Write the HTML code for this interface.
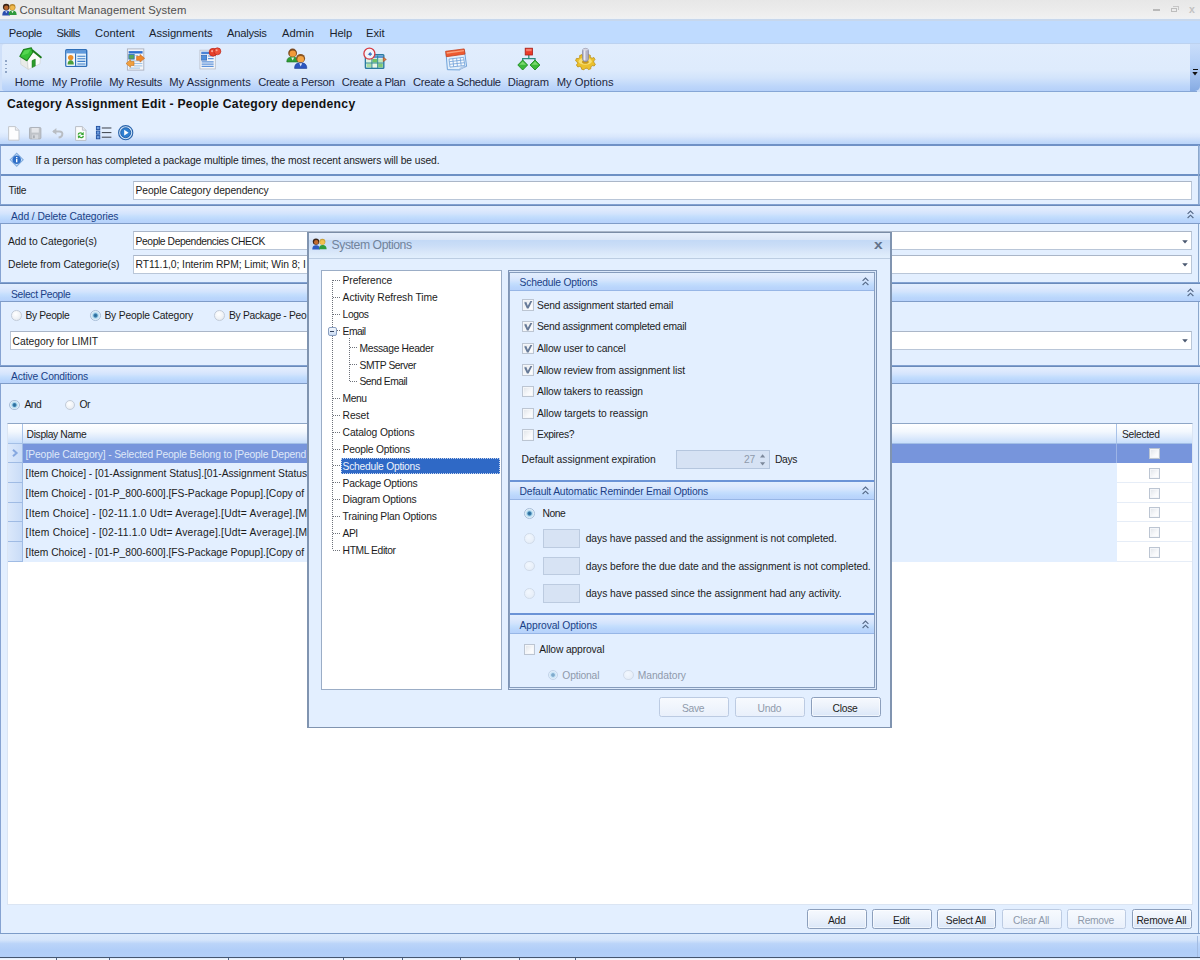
<!DOCTYPE html>
<html lang="en"><head><meta charset="utf-8"><title>Consultant Management System</title>
<style>
html,body{margin:0;padding:0}
body{width:1200px;height:960px;overflow:hidden;position:relative;background:#e3efff;font-family:"Liberation Sans", sans-serif}
div{position:absolute;box-sizing:border-box}
span{position:absolute;white-space:pre;line-height:14px;font-family:"Liberation Sans", sans-serif}
svg{position:absolute;overflow:visible}
.t{font-size:10.3px;font-weight:400;color:#1c1c1c}
.tw{font-size:10.3px;font-weight:400;color:#eef3fc}
.tg{font-size:10.3px;font-weight:400;color:#8f9aab}
.th{font-size:10.3px;font-weight:400;color:#1b3f86}
.tsel{font-size:10.3px;font-weight:400;color:#dfe8f9}
.m{font-size:11.2px;font-weight:400;color:#1a1f2e}
.tb{font-size:11.2px;font-weight:400;color:#1d2740}
.ttl{font-size:11.3px;font-weight:400;color:#505050}
.dt{font-size:12.2px;font-weight:400;color:#71839b}
.h{font-size:12.2px;font-weight:700;color:#121212}

.hd{background:linear-gradient(#e2eefe 0%,#dde9fd 25%,#d3e4fd 45%,#c4defd 62%,#bad6fc 82%,#b7d2fb 100%)}
.inp{background:#fff;border:1px solid #b9c6d8;border-top-color:#aab6c8}
.btn{border:1px solid #8c9fbc;border-radius:2.5px;background:linear-gradient(#f6f9fe 0%,#ecf2fb 45%,#dbe7f8 100%);box-shadow:inset 0 0 0 1px rgba(255,255,255,.55)}
.btnd{border:1px solid #bccbe2;border-radius:2.5px;background:linear-gradient(#f7fafe 0%,#e9f0fb 100%)}
.cb{border:1px solid #bcc5d2;background:linear-gradient(135deg,#dfe3e8 0%,#f8f9fb 60%,#ffffff 100%);box-shadow:inset 0 0 0 1px #f4f6f9}
.rb{border:1px solid #c3ccd9;border-radius:50%;background:radial-gradient(circle at 40% 35%,#ffffff 0%,#eef1f5 60%,#d8dde5 100%)}
.rbs{border:1px solid #a9bed8;border-radius:50%;background:radial-gradient(circle at 50% 50%,#2a6690 0%,#3a80b0 26%,#a9d4ec 40%,#e3f1fa 66%,#d3dfec 100%)}

</style></head><body>
<div style="left:0px;top:0px;width:1200px;height:19.4px;background:linear-gradient(#e7e7e7 0%,#ececec 55%,#f0f0f0 88%,#edf1f5 100%)"></div>
<svg style="left:2px;top:3px" width="15" height="13" viewBox="0 0 15 13">
<circle cx="4.2" cy="4" r="3.3" fill="#3a2418"/><circle cx="4.3" cy="4.7" r="2.2" fill="#b8662e"/>
<path d="M0.3 12.6 C0.3 8.6 2 7.6 4.3 7.6 C6.6 7.6 8 8.8 8 12.6Z" fill="#2b4fb0"/>
<circle cx="10.4" cy="4.2" r="3.1" fill="#b8862a"/><circle cx="10.4" cy="4.8" r="2.4" fill="#f0b84a"/>
<path d="M6.6 12 C6.6 8.4 8.2 7.4 10.5 7.4 C12.8 7.4 14.6 8.4 14.6 12Z" fill="#2f9a3c"/>
<path d="M9.4 8 L10.5 10.2 L11.6 8Z" fill="#e8f4e8"/><path d="M3.2 8.2 L4.3 10.2 L5.4 8.2Z" fill="#dfe6fb"/>
</svg>
<span class="ttl" style="left:19.50px;top:3.18px;letter-spacing:0.111px;">Consultant Management System</span>
<div style="left:1153px;top:9px;width:7px;height:1.6px;background:#b9b9b9"></div>
<div style="left:1170.5px;top:7.5px;width:6px;height:4.5px;border:1px solid #bdbdbd;border-top-width:1.6px"></div>
<div style="left:1172.5px;top:5.8px;width:6px;height:4.5px;border:1px solid #c6c6c6;border-top-width:1.4px;border-left:none;border-bottom:none"></div>
<span class="ttl" style="left:1189.00px;top:2.48px;letter-spacing:-0.100px;color:#c2c2c2;font-weight:700;font-size:10.5px">x</span>
<div style="left:0px;top:19.4px;width:1200px;height:24.6px;background:#bfdbff;border-top:2px solid #c7d7ec;border-bottom:1px solid #bcd2f0"></div>
<span class="m" style="left:8.80px;top:25.52px;letter-spacing:-0.274px;">People</span>
<span class="m" style="left:56.50px;top:25.52px;letter-spacing:-0.435px;">Skills</span>
<span class="m" style="left:95.00px;top:25.52px;letter-spacing:0.073px;">Content</span>
<span class="m" style="left:149.00px;top:25.52px;letter-spacing:-0.050px;">Assignments</span>
<span class="m" style="left:227.00px;top:25.52px;letter-spacing:-0.246px;">Analysis</span>
<span class="m" style="left:282.00px;top:25.52px;letter-spacing:0.056px;">Admin</span>
<span class="m" style="left:329.50px;top:25.52px;letter-spacing:-0.129px;">Help</span>
<span class="m" style="left:366.00px;top:25.52px;letter-spacing:-0.039px;">Exit</span>
<div style="left:0px;top:44px;width:1200px;height:48px;background:#cfe0f9"></div>
<div style="left:1.6px;top:44px;width:1189.4px;height:47.3px;background:linear-gradient(#e1edfd 0%,#deebfc 55%,#d3e4fb 72%,#bdd6fa 90%,#b5d0f9 100%);border-radius:3px 0 0 3px"></div>
<div style="left:1190px;top:44px;width:10px;height:47.3px;background:linear-gradient(#c9ddfa 0%,#b4cff6 45%,#86abe3 100%);border-radius:0 0 5px 0"></div>
<div style="left:0px;top:91px;width:1197px;height:1.2px;background:#86a6d6"></div>
<div style="left:0px;top:92.2px;width:1200px;height:1.6px;background:#e3f0fd"></div>
<div style="left:5px;top:60.0px;width:1.7px;height:1.7px;background:#8fa5c6"></div>
<div style="left:5px;top:63.8px;width:1.7px;height:1.7px;background:#8fa5c6"></div>
<div style="left:5px;top:67.6px;width:1.7px;height:1.7px;background:#8fa5c6"></div>
<div style="left:5px;top:71.4px;width:1.7px;height:1.7px;background:#8fa5c6"></div>
<div style="left:1192.5px;top:69px;width:5px;height:1.1px;background:#111"></div>
<svg style="left:1192px;top:71.5px" width="6" height="4" viewBox="0 0 6 4"><path d="M0.3 0 L5.7 0 L3 3.6Z" fill="#111"/></svg>
<span class="tb" style="left:14.70px;top:74.52px;letter-spacing:-0.011px;">Home</span>
<span class="tb" style="left:52.00px;top:74.52px;letter-spacing:0.057px;">My Profile</span>
<span class="tb" style="left:109.30px;top:74.52px;letter-spacing:-0.263px;">My Results</span>
<span class="tb" style="left:169.30px;top:74.52px;letter-spacing:0.003px;">My Assignments</span>
<span class="tb" style="left:258.20px;top:74.52px;letter-spacing:-0.358px;">Create a Person</span>
<span class="tb" style="left:341.80px;top:74.52px;letter-spacing:-0.379px;">Create a Plan</span>
<span class="tb" style="left:413.00px;top:74.52px;letter-spacing:-0.287px;">Create a Schedule</span>
<span class="tb" style="left:507.80px;top:74.52px;letter-spacing:-0.183px;">Diagram</span>
<span class="tb" style="left:556.70px;top:74.52px;letter-spacing:0.042px;">My Options</span>
<svg style="left:18px;top:46px" width="25" height="26" viewBox="18 46 25 26">
<path d="M20.6 57.6 L27.4 60.6 L28.3 69.4 L20.8 64.4Z" fill="#e9ebe7" stroke="#c4c7c2" stroke-width=".5"/>
<path d="M27.4 60.6 L32.8 51.4 L40.4 57.8 L40 63.8 L28.3 69.4Z" fill="#fbfbfa" stroke="#c4c7c2" stroke-width=".5"/>
<path d="M32 60.6 L35.3 59.1 L35.3 66 L32 67.6Z" fill="#2c9c2c" stroke="#1d7a1d" stroke-width=".5"/>
<path d="M19.8 56.4 L23.6 49.6 L31.4 47.9 L33 52 L26.9 60.7Z" fill="#36c036" stroke="#1f821f" stroke-width="1.1" stroke-linejoin="round"/>
<path d="M21.4 55.8 L24.4 50.6 L30.4 49.3 L28.2 53.4Z" fill="#55d650"/>
<path d="M32.6 50.6 L40.8 57.3" stroke="#1c7a1c" stroke-width="2" stroke-linecap="round"/>
</svg>
<svg style="left:65px;top:49px" width="23" height="18.5" viewBox="65 49 23 18.5">
<rect x="65.8" y="49.8" width="20.9" height="16.6" rx="1" fill="#e2f1fb" stroke="#2f6fb8" stroke-width="1.4"/>
<rect x="66.5" y="50.5" width="19.5" height="3" fill="#3d7fd0"/>
<rect x="66.5" y="51.6" width="19.5" height=".8" fill="#8fc0ee"/>
<rect x="66.6" y="53.5" width="8.2" height="12.2" fill="#f4f8fc"/>
<rect x="75" y="53.5" width="1.1" height="12.4" fill="#2f6fb8"/>
<circle cx="70.7" cy="57.6" r="2.7" fill="#ea8f2a"/><path d="M67.6 64.6 C67.6 61.2 69 60.2 70.7 60.2 C72.4 60.2 73.8 61.2 73.8 64.6Z" fill="#4c9e3a"/>
<path d="M77.4 56.2H85.4M77.4 58.8H85.4M77.4 61.4H85.4M77.4 64H85.4" stroke="#3c7cc8" stroke-width="1.1"/>
</svg>
<svg style="left:125px;top:47.5px" width="21" height="23.0" viewBox="125 47.5 21 23.0">
<rect x="127.4" y="48.4" width="16.4" height="21.2" fill="#f3f5f9" stroke="#aab0bd" stroke-width=".9"/>
<rect x="128.6" y="50.6" width="14" height="2.4" fill="#2f6fd0"/>
<rect x="128.8" y="54" width="5.4" height="4.6" fill="#58a858" stroke="#2f6fbf" stroke-width=".8"/>
<path d="M135.4 55H138M129 60.4H142.4M133 63H142.4M134 65.4H142.4M129 67.6H140" stroke="#9fc4e6" stroke-width="1"/>
<path d="M136.6 55.8 L140 55.8 L140 54 L144.6 57.8 L140 61.6 L140 59.8 L136.6 59.8Z" fill="#f0882a" stroke="#c8641c" stroke-width=".6"/>
<path d="M134 61 L130.6 61 L130.6 59.2 L126 63 L130.6 66.8 L130.6 65 L134 65Z" fill="#efa040" stroke="#c8741c" stroke-width=".6"/>
</svg>
<svg style="left:199.4px;top:47.4px" width="22.5" height="22.5" viewBox="0 0 24 24">
<rect x="1" y="3.4" width="16.4" height="20" fill="#f4f6fa" stroke="#b9bfcb" stroke-width=".9"/>
<rect x="2.4" y="5" width="13.4" height="2.6" fill="#4b83d6"/>
<rect x="2.8" y="8.8" width="5.4" height="5.2" fill="#4f8fdc" stroke="#2d62b0" stroke-width=".7"/>
<path d="M9.6 9.6H15.6M9.6 12.4H15.6M2.8 15.8H15.6M2.8 18.2H15.6M2.8 20.6H15.6" stroke="#5d92da" stroke-width="1.2"/>
<circle cx="15" cy="5.6" r="4.2" fill="#e8402a" stroke="#b4241a" stroke-width=".7"/>
<circle cx="19.6" cy="4.6" r="3.7" fill="#ee5038" stroke="#b4241a" stroke-width=".7"/>
<circle cx="14" cy="4.4" r="1.2" fill="#f9a090"/><circle cx="18.8" cy="3.4" r="1.1" fill="#f9a898"/>
</svg>
<svg style="left:285.6px;top:48px" width="22" height="21" viewBox="0 0 22 21">
<circle cx="6.6" cy="5" r="4.4" fill="#7c4a1f"/><circle cx="6.8" cy="5.8" r="3.2" fill="#f29a3a"/>
<path d="M.8 14 C.8 9.8 3.4 9 6.6 9 C9.8 9 12.2 9.8 12.2 14Z" fill="#2f9e37" stroke="#1c6e22" stroke-width=".6"/>
<path d="M5.2 9.4 L6.7 12.4 L8.2 9.4Z" fill="#eaf5ea"/>
<circle cx="14.6" cy="10.4" r="4.5" fill="#8a5522"/><circle cx="14.7" cy="11.3" r="3.3" fill="#f4a444"/>
<path d="M8.6 20.4 C8.6 15.8 11.2 14.8 14.6 14.8 C18 14.8 20.8 15.8 20.8 20.4Z" fill="#2c56c0" stroke="#1b3a90" stroke-width=".6"/>
<path d="M13.2 15.2 L14.7 18.4 L16.2 15.2Z" fill="#e6ebfa"/>
</svg>
<svg style="left:361px;top:46.5px" width="27" height="23.5" viewBox="361 46.5 27 23.5">
<rect x="365.4" y="54.2" width="18.4" height="13.6" rx=".8" fill="#f1f8f4" stroke="#2a7aa0" stroke-width="1.4"/>
<rect x="366.2" y="55" width="16.8" height="2.6" fill="#5a98d8"/>
<rect x="366.6" y="58.4" width="4.8" height="3.6" fill="#dff1dc"/><rect x="372.4" y="58.4" width="4.8" height="3.6" fill="#6fc266"/><rect x="378.2" y="58.4" width="4.6" height="3.6" fill="#c4e8bd"/>
<rect x="366.6" y="63" width="4.8" height="3.8" fill="#a8dca0"/><rect x="372.4" y="63" width="4.8" height="3.8" fill="#e8f5e6"/><rect x="378.2" y="63" width="4.6" height="3.8" fill="#7fca76"/>
<path d="M371.9 57.6V67.4M377.7 55V67.4M366 62.5H383.4" stroke="#2f8a8c" stroke-width="1"/>
<path d="M383.2 56.6 L386.4 59 L383.2 61.2Z" fill="#e8763a" stroke="#8a4a2a" stroke-width=".5"/>
<circle cx="369.4" cy="53.2" r="5.5" fill="#f0f5fc" stroke="#d63a42" stroke-width="1.3"/>
<path d="M372 53.6 H369 L370.6 52 M369 53.6 L370.6 55.2" fill="none" stroke="#3c6cc0" stroke-width="1.1"/>
</svg>
<svg style="left:444px;top:47.5px" width="25" height="23.0" viewBox="444 47.5 25 23.0">
<path d="M446 52 L464.4 49.6 L466.6 65.8 C463.6 66.6 461 68 459.4 69.4 L447.4 69.2Z" fill="#e2effb" stroke="#6ea2da" stroke-width="1"/>
<path d="M445.6 50.8 L464.2 48.4 L465 53.6 L446.4 56.2Z" fill="#ee5a30" stroke="#c8401c" stroke-width=".8"/>
<path d="M446.6 51.8 L463.8 49.6 L464 50.8 L446.8 53.2Z" fill="#f9a27c"/>
<path d="M449 58.6 L463.6 56.8 L464.8 65 L450 66.6Z" fill="#f6fafe"/>
<path d="M449 58.6 L463.6 56.8 M449.4 61.2 L464 59.4 M449.8 63.8 L464.4 62.2 M450 66.6 L464.8 65 M449 58.6 L450 66.6 M452.8 58.2 L453.6 66.2 M456.6 57.7 L457.4 65.8 M460.2 57.2 L461.2 65.4 M463.6 56.8 L464.8 65" stroke="#6f9fd8" stroke-width=".8"/>
<path d="M459.4 69.4 C459.8 67.4 460.6 66.4 466.6 65.8Z" fill="#c8d9ee" stroke="#8fb0dc" stroke-width=".6"/>
</svg>
<svg style="left:516px;top:47px" width="26" height="24" viewBox="516 47 26 24">
<path d="M528.8 55V58.6M522.7 60.4V58.6H535V60.4" fill="none" stroke="#2a8c7c" stroke-width="1.3"/>
<rect x="525.2" y="48.2" width="7.3" height="6.8" fill="#ec3a2a" stroke="#a82018" stroke-width=".8"/>
<rect x="526.1" y="49" width="5.5" height="2.2" fill="#f77c6c"/>
<path d="M522.7 60 L527.6 65 L522.7 70 L517.8 65Z" fill="#3cb83a" stroke="#1f8a22" stroke-width=".9"/>
<path d="M535 60 L539.9 65 L535 70 L530.1 65Z" fill="#3cb83a" stroke="#1f8a22" stroke-width=".9"/>
<path d="M522.7 61.4 L526 64.8 L519.4 64.8Z" fill="#7cd870"/><path d="M535 61.4 L538.3 64.8 L531.7 64.8Z" fill="#7cd870"/>
</svg>
<svg style="left:573px;top:47px" width="25" height="24" viewBox="573 47 25 24">
<path d="M585 55.6 L587.6 55.8 L588.8 54.4 L591 55.4 L590.8 57.4 L592.8 58.2 L594.4 57.4 L595.6 59.6 L594.2 61 L594.6 62.8 L596 64 L594.8 66 L592.8 65.6 L591.4 67 L591.4 68.8 L589 69.6 L587.8 68.2 L585.8 68.4 L584.6 69.8 L582.2 69.2 L582 67.4 L580.2 66.4 L578.4 67 L577 65 L578.2 63.6 L577.8 61.8 L576.2 60.8 L577 58.4 L578.8 58.6 L580.4 57.4 L580.2 55.6 L582.6 54.6 L583.8 56Z" fill="#ebc02c" stroke="#bd9016" stroke-width=".8" stroke-linejoin="round" transform="translate(-0.6 0)"/>
<ellipse cx="585.2" cy="61.2" rx="6.6" ry="3.6" fill="#f7df72"/>
<ellipse cx="585.4" cy="62" rx="3.4" ry="1.8" fill="#c8991c"/>
<rect x="582.6" y="48.4" width="5.8" height="13" rx="2.4" fill="#b4b2c8" stroke="#84849c" stroke-width=".8"/>
<rect x="583.7" y="49.2" width="1.7" height="11.4" rx=".8" fill="#e8e8f0"/>
<ellipse cx="585.5" cy="49.6" rx="2.6" ry="1.1" fill="#d6d6e2"/>
</svg>
<span class="h" style="left:7.00px;top:97.07px;letter-spacing:0.284px;">Category Assignment Edit - People Category dependency</span>
<div style="left:0px;top:132px;width:1200px;height:12.5px;background:linear-gradient(#e3efff 0%,#d9e7fc 35%,#c2d9fa 75%,#b7d3fa 100%)"></div>
<div style="left:0px;top:144.2px;width:1200px;height:1.6px;background:#6f91c6"></div>
<div style="left:0px;top:145.8px;width:1200px;height:29px;background:#e3efff;border-left:1px solid #86a3d2;border-right:1.2px solid #a3bde3"></div>
<span class="t" style="left:35.50px;top:153.93px;letter-spacing:-0.091px;">If a person has completed a package multiple times, the most recent answers will be used.</span>
<div style="left:0px;top:174.4px;width:1200px;height:1.5px;background:#6d90c4"></div>
<div style="left:0px;top:175.9px;width:1200px;height:30px;background:#e3efff;border-left:1px solid #86a3d2;border-right:1.2px solid #a3bde3"></div>
<svg style="left:7.5px;top:125.8px" width="11.6" height="14.8" viewBox="0 0 11.6 14.8"><path d="M.6 .6 H7.4 L11 4.2 V14.2 H.6Z" fill="#fdfdfe" stroke="#c3c7cd" stroke-width="1"/><path d="M7.4 .6 V4.2 H11" fill="#eceef2" stroke="#c3c7cd" stroke-width=".9"/></svg>
<svg style="left:29px;top:127px" width="12.4" height="12.4" viewBox="0 0 12.4 12.4"><rect x=".5" y=".5" width="11.4" height="11.4" rx="1" fill="#bfc3c8" stroke="#a9aeb5" stroke-width=".9"/><rect x="2.6" y="1" width="7.2" height="4.6" fill="#e4e6ea"/><rect x="3.2" y="7.6" width="6" height="4.2" fill="#d5d8dd"/><rect x="4" y="8.4" width="1.8" height="2.8" fill="#a9aeb5"/></svg>
<svg style="left:52px;top:128px" width="12" height="10.4" viewBox="0 0 12 10.4"><path d="M1 3.4 H7.2 C9.8 3.4 10.8 5 10.2 7 C9.8 8.6 8.6 9.4 6.6 9.6" fill="none" stroke="#b9bdc3" stroke-width="2"/><path d="M4.4 0 L.2 3.4 L4.4 6.8Z" fill="#b9bdc3"/></svg>
<svg style="left:75px;top:125.6px" width="11.6" height="15" viewBox="0 0 11.6 15"><path d="M.6 .6 H7.4 L11 4.2 V14.4 H.6Z" fill="#fbfcfd" stroke="#b9bec6" stroke-width="1"/><path d="M7.4 .6 V4.2 H11" fill="#e6e9ee" stroke="#b9bec6" stroke-width=".9"/>
<path d="M2.6 8.4 C3 6.2 6 5.6 7.6 7 L8.6 5.8 L8.8 9.2 L5.6 8.8 L6.6 7.9 C5.6 7.2 4.2 7.6 3.9 8.8Z" fill="#38a632"/>
<path d="M9 10.2 C8.6 12.4 5.6 13 4 11.6 L3 12.8 L2.8 9.4 L6 9.8 L5 10.7 C6 11.4 7.4 11 7.7 9.8Z" fill="#38a632"/></svg>
<svg style="left:95.5px;top:126.4px" width="15.6" height="13.4" viewBox="0 0 15.6 13.4"><rect x=".4" y=".4" width="3.4" height="3.2" fill="#6f9fe0" stroke="#1f4fa0" stroke-width=".9"/><rect x=".4" y="5" width="3.4" height="3.2" fill="#6f9fe0" stroke="#1f4fa0" stroke-width=".9"/><rect x=".4" y="9.6" width="3.4" height="3.2" fill="#6f9fe0" stroke="#1f4fa0" stroke-width=".9"/>
<path d="M5.8 2H15.4M5.8 6.6H15.4M5.8 11.2H15.4" stroke="#3a3f49" stroke-width="1"/></svg>
<svg style="left:117.8px;top:125.4px" width="15.4" height="15.4" viewBox="0 0 15.4 15.4"><circle cx="7.7" cy="7.7" r="7.1" fill="#cfe4f8" stroke="#2a64ac" stroke-width="1.1"/><circle cx="7.7" cy="7.7" r="5" fill="#2f7fd0" stroke="#1d5aa6" stroke-width=".9"/><path d="M6.2 4.8 L10.6 7.7 L6.2 10.6Z" fill="#fff"/></svg>
<svg style="left:9.2px;top:151.6px" width="15.4" height="15.6" viewBox="0 0 15.4 15.6"><path d="M7.7 .5 L14.9 7.8 L7.7 15.1 L.5 7.8Z" fill="#7fa9dc"/><path d="M7.7 2 L13.5 7.8 L7.7 13.6 L1.9 7.8Z" fill="#cde2f8"/><circle cx="7.7" cy="7.8" r="4.3" fill="#2f6fc8"/><rect x="7" y="6.9" width="1.4" height="3.4" fill="#fff"/><rect x="7" y="5" width="1.4" height="1.2" fill="#fff"/></svg>
<span class="t" style="left:8.40px;top:183.53px;letter-spacing:-0.216px;">Title</span>
<div class="inp" style="left:133px;top:181.2px;width:1059.4px;height:18.6px;"></div>
<span class="t" style="left:135.60px;top:183.53px;letter-spacing:-0.103px;">People Category dependency</span>
<div style="left:0px;top:145.8px;width:1px;height:788px;background:#86a3d2"></div>
<div style="left:1198.3px;top:145px;width:1.2px;height:789px;background:#8ca8cc"></div>
<div style="left:0px;top:204.1px;width:1200px;height:2px;background:linear-gradient(#94b3e2,#6a8aba 60%,#6a8aba)"></div>
<div class="hd" style="left:0px;top:206.1px;width:1200px;height:16.900000000000006px;"></div>
<div style="left:0px;top:223px;width:1200px;height:1.1px;background:#7f9cc8"></div>
<span class="th" style="left:11.00px;top:209.83px;letter-spacing:-0.084px;">Add / Delete Categories</span>
<svg style="left:1186.5px;top:210.1px" width="7" height="9" viewBox="0 0 7 9"><path d="M0.6 3.8 L3.5 1 L6.4 3.8 M0.6 8 L3.5 5.2 L6.4 8" fill="none" stroke="#566a88" stroke-width="1.15"/></svg>
<span class="t" style="left:8.00px;top:234.93px;letter-spacing:-0.016px;">Add to Categorie(s)</span>
<div class="inp" style="left:133px;top:231.2px;width:1059.4px;height:18.8px;"></div>
<span class="t" style="left:135.60px;top:234.93px;letter-spacing:-0.415px;">People Dependencies CHECK</span>
<span class="t" style="left:8.00px;top:257.93px;letter-spacing:-0.056px;">Delete from Categorie(s)</span>
<div class="inp" style="left:133px;top:254.8px;width:1059.4px;height:18.8px;"></div>
<span class="t" style="left:135.60px;top:257.93px;letter-spacing:-0.061px;">RT11.1,0; Interim RPM; Limit; Win 8; I</span>
<svg style="left:1182.4px;top:239.5px" width="6" height="4" viewBox="0 0 6 4"><path d="M0.2 0.3 L5.8 0.3 L3 3.6Z" fill="#4a5870"/></svg>
<svg style="left:1182.4px;top:263px" width="6" height="4" viewBox="0 0 6 4"><path d="M0.2 0.3 L5.8 0.3 L3 3.6Z" fill="#4a5870"/></svg>
<div style="left:0px;top:281.8px;width:1200px;height:2px;background:linear-gradient(#94b3e2,#6a8aba 60%,#6a8aba)"></div>
<div class="hd" style="left:0px;top:283.8px;width:1200px;height:17.19999999999999px;"></div>
<div style="left:0px;top:301px;width:1200px;height:1.1px;background:#7f9cc8"></div>
<span class="th" style="left:11.00px;top:287.53px;letter-spacing:-0.319px;">Select People</span>
<svg style="left:1186.5px;top:287.8px" width="7" height="9" viewBox="0 0 7 9"><path d="M0.6 3.8 L3.5 1 L6.4 3.8 M0.6 8 L3.5 5.2 L6.4 8" fill="none" stroke="#566a88" stroke-width="1.15"/></svg>
<div class="rb" style="left:10.9px;top:310.1px;width:10.8px;height:10.8px;"></div>
<span class="t" style="left:25.40px;top:309.13px;letter-spacing:-0.328px;">By People</span>
<div class="rbs" style="left:89.89999999999999px;top:310.1px;width:10.8px;height:10.8px;"></div>
<span class="t" style="left:104.40px;top:309.13px;letter-spacing:-0.166px;">By People Category</span>
<div class="rb" style="left:214.29999999999998px;top:310.1px;width:10.8px;height:10.8px;"></div>
<span class="t" style="left:229.00px;top:309.13px;letter-spacing:-0.314px;">By Package - Peo</span>
<div class="inp" style="left:10px;top:331.2px;width:1182.4px;height:18.4px;"></div>
<span class="t" style="left:12.60px;top:334.53px;letter-spacing:-0.025px;">Category for LIMIT</span>
<svg style="left:1182.4px;top:338.5px" width="6" height="4" viewBox="0 0 6 4"><path d="M0.2 0.3 L5.8 0.3 L3 3.6Z" fill="#4a5870"/></svg>
<div style="left:0px;top:364.5px;width:1200px;height:2px;background:linear-gradient(#94b3e2,#6a8aba 60%,#6a8aba)"></div>
<div class="hd" style="left:0px;top:366.5px;width:1200px;height:16.600000000000023px;"></div>
<div style="left:0px;top:383.1px;width:1200px;height:1.1px;background:#7f9cc8"></div>
<span class="th" style="left:11.00px;top:370.23px;letter-spacing:-0.151px;">Active Conditions</span>
<div class="rbs" style="left:9.4px;top:399.6px;width:10.8px;height:10.8px;"></div>
<span class="t" style="left:24.40px;top:397.93px;letter-spacing:-0.443px;">And</span>
<div class="rb" style="left:64.6px;top:399.6px;width:10.8px;height:10.8px;"></div>
<span class="t" style="left:79.60px;top:397.93px;letter-spacing:-0.727px;">Or</span>
<div style="left:7px;top:422.6px;width:1185.6px;height:482.6px;background:#fff;border:1px solid #dbe5f3;border-top-color:#8ea6c6"></div>
<div style="left:8px;top:423.6px;width:1183.6px;height:20px;background:linear-gradient(#ffffff 0%,#f3f8fe 40%,#d6e6fb 82%,#c8dffc 100%);border-bottom:1px solid #a3bfe6"></div>
<div style="left:22px;top:423.6px;width:1px;height:19.6px;background:#a8c2e8"></div>
<div style="left:1116.3px;top:423.6px;width:1px;height:19.6px;background:#a8c2e8"></div>
<span class="t" style="left:26.60px;top:427.73px;letter-spacing:-0.358px;">Display Name</span>
<span class="t" style="left:1122.00px;top:427.73px;letter-spacing:-0.297px;">Selected</span>
<div style="left:8px;top:443.6px;width:14.5px;height:19.68px;background:linear-gradient(90deg,#dbe8fb,#c9dcf7);border-bottom:1px solid #9fbbe4;border-right:1px solid #9fbbe4"></div>
<div style="left:22.5px;top:443.6px;width:1169.1px;height:19.28px;background:#7795dc"></div>
<svg style="left:11.5px;top:449.1px" width="6" height="8" viewBox="0 0 6 8"><path d="M1 0.8 L4.6 4 L1 7.2" fill="none" stroke="#86a8e0" stroke-width="2"/></svg>
<div style="left:1116.3px;top:443.6px;width:1px;height:19.28px;background:#9db4e6"></div>
<span class="tsel" style="left:25.60px;top:447.53px;letter-spacing:-0.151px;">[People Category] - Selected People Belong to [People Depend</span>
<div class="cb" style="left:1149.3px;top:448.20000000000005px;width:11px;height:11px"></div>
<div style="left:8px;top:463.28000000000003px;width:14.5px;height:19.68px;background:linear-gradient(90deg,#dbe8fb,#c9dcf7);border-bottom:1px solid #9fbbe4;border-right:1px solid #9fbbe4"></div>
<div style="left:22.5px;top:463.28000000000003px;width:1094px;height:19.68px;background:#e3efff"></div>
<div style="left:1117.3px;top:481.96000000000004px;width:74.3px;height:1px;background:#e6edf7"></div>
<span class="t" style="left:25.60px;top:467.21px;letter-spacing:-0.019px;">[Item Choice] - [01-Assignment Status].[01-Assignment Status</span>
<div class="cb" style="left:1149.3px;top:467.88000000000005px;width:11px;height:11px"></div>
<div style="left:8px;top:482.96000000000004px;width:14.5px;height:19.68px;background:linear-gradient(90deg,#dbe8fb,#c9dcf7);border-bottom:1px solid #9fbbe4;border-right:1px solid #9fbbe4"></div>
<div style="left:22.5px;top:482.96000000000004px;width:1094px;height:19.68px;background:#e3efff"></div>
<div style="left:1117.3px;top:501.64000000000004px;width:74.3px;height:1px;background:#e6edf7"></div>
<span class="t" style="left:25.60px;top:486.89px;letter-spacing:-0.024px;">[Item Choice] - [01-P_800-600].[FS-Package Popup].[Copy of</span>
<div class="cb" style="left:1149.3px;top:487.56000000000006px;width:11px;height:11px"></div>
<div style="left:8px;top:502.64000000000004px;width:14.5px;height:19.68px;background:linear-gradient(90deg,#dbe8fb,#c9dcf7);border-bottom:1px solid #9fbbe4;border-right:1px solid #9fbbe4"></div>
<div style="left:22.5px;top:502.64000000000004px;width:1094px;height:19.68px;background:#e3efff"></div>
<div style="left:1117.3px;top:521.32px;width:74.3px;height:1px;background:#e6edf7"></div>
<span class="t" style="left:25.60px;top:506.57px;letter-spacing:0.220px;">[Item Choice] - [02-11.1.0 Udt= Average].[Udt= Average].[M</span>
<div class="cb" style="left:1149.3px;top:507.24000000000007px;width:11px;height:11px"></div>
<div style="left:8px;top:522.32px;width:14.5px;height:19.68px;background:linear-gradient(90deg,#dbe8fb,#c9dcf7);border-bottom:1px solid #9fbbe4;border-right:1px solid #9fbbe4"></div>
<div style="left:22.5px;top:522.32px;width:1094px;height:19.68px;background:#e3efff"></div>
<div style="left:1117.3px;top:541.0px;width:74.3px;height:1px;background:#e6edf7"></div>
<span class="t" style="left:25.60px;top:526.25px;letter-spacing:0.220px;">[Item Choice] - [02-11.1.0 Udt= Average].[Udt= Average].[M</span>
<div class="cb" style="left:1149.3px;top:526.9200000000001px;width:11px;height:11px"></div>
<div style="left:8px;top:542.0px;width:14.5px;height:19.68px;background:linear-gradient(90deg,#dbe8fb,#c9dcf7);border-bottom:1px solid #9fbbe4;border-right:1px solid #9fbbe4"></div>
<div style="left:22.5px;top:542.0px;width:1094px;height:19.68px;background:#e3efff"></div>
<div style="left:1117.3px;top:560.68px;width:74.3px;height:1px;background:#e6edf7"></div>
<span class="t" style="left:25.60px;top:545.93px;letter-spacing:-0.024px;">[Item Choice] - [01-P_800-600].[FS-Package Popup].[Copy of</span>
<div class="cb" style="left:1149.3px;top:546.6px;width:11px;height:11px"></div>
<div class="btn" style="left:807px;top:909.3px;width:59.60000000000002px;height:19.40000000000009px"></div>
<span class="t" style="left:828.00px;top:913.53px;letter-spacing:-0.309px;">Add</span>
<div class="btn" style="left:872.1px;top:909.3px;width:59.60000000000002px;height:19.40000000000009px"></div>
<span class="t" style="left:893.00px;top:913.53px;letter-spacing:-0.287px;">Edit</span>
<div class="btn" style="left:937.2px;top:909.3px;width:59.299999999999955px;height:19.40000000000009px"></div>
<span class="t" style="left:945.80px;top:913.53px;letter-spacing:-0.236px;">Select All</span>
<div class="btnd" style="left:1002.2px;top:909.3px;width:59.399999999999864px;height:19.40000000000009px"></div>
<span class="tg" style="left:1013.00px;top:913.53px;letter-spacing:-0.260px;">Clear All</span>
<div class="btnd" style="left:1067.2px;top:909.3px;width:59.200000000000045px;height:19.40000000000009px"></div>
<span class="tg" style="left:1077.60px;top:913.53px;letter-spacing:-0.324px;">Remove</span>
<div class="btn" style="left:1132.2px;top:909.3px;width:60.200000000000045px;height:19.40000000000009px"></div>
<span class="t" style="left:1136.40px;top:913.53px;letter-spacing:-0.208px;">Remove All</span>
<div style="left:0px;top:933px;width:1200px;height:1.4px;background:#7d9cc8"></div>
<div style="left:0px;top:934.4px;width:1200px;height:23px;background:linear-gradient(#dceafc 0%,#d5e5fb 26%,#bbd4f9 42%,#b1cef8 70%,#b3cff8 100%)"></div>
<div style="left:1197.3px;top:935.5px;width:1px;height:21.7px;background:#a3bce2"></div>
<div style="left:0px;top:957.2px;width:1200px;height:1.3px;background:#46566e"></div>
<div style="left:0px;top:958.5px;width:1200px;height:1.5px;background:#f4f7fb"></div>
<div style="left:56px;top:958px;width:1.2px;height:2px;background:#4f6488"></div>
<div style="left:109px;top:958px;width:1.2px;height:2px;background:#4f6488"></div>
<div style="left:228px;top:958px;width:1.2px;height:2px;background:#4f6488"></div>
<div style="left:343px;top:958px;width:1.2px;height:2px;background:#4f6488"></div>
<div style="left:402px;top:958px;width:1.2px;height:2px;background:#4f6488"></div>
<div style="left:460px;top:958px;width:1.2px;height:2px;background:#4f6488"></div>
<div style="left:519px;top:958px;width:1.2px;height:2px;background:#4f6488"></div>
<div style="left:575px;top:958px;width:1.2px;height:2px;background:#4f6488"></div>
<div style="left:307px;top:231.5px;width:585px;height:496.1px;background:#e3efff;border:2.2px solid #8094b0;border-top:1.4px solid #7b8da6;border-bottom-width:1.9px;background-clip:padding-box"></div>
<div style="left:309.2px;top:232.9px;width:580.6px;height:25.9px;background:linear-gradient(#e6effc 0%,#dbe6f7 26%,#c3d9f6 29%,#cbdef7 52%,#d9e7f9 76%,#e2effd 100%);border-bottom:1px solid #bccde2"></div>
<svg style="left:312px;top:238.4px" width="15" height="12" viewBox="0 0 15 12">
<circle cx="4" cy="3.6" r="3.2" fill="#3a2418"/><circle cx="4.2" cy="4.3" r="2.2" fill="#c06a30"/>
<path d="M.3 11.6 C.3 8 1.8 7.2 4.1 7.2 C6.4 7.2 7.8 8.2 7.8 11.6Z" fill="#2b5cc4"/>
<circle cx="10.4" cy="3.8" r="3" fill="#c9a038"/><circle cx="10.4" cy="4.4" r="2.3" fill="#f2c04e"/>
<path d="M7 11.2 C7 8 8.4 7 10.5 7 C12.8 7 14.6 8 14.6 11.2Z" fill="#2f9c3e"/>
</svg>
<span class="dt" style="left:331.60px;top:238.37px;letter-spacing:-0.431px;">System Options</span>
<span class="dt" style="left:873.60px;top:237.67px;letter-spacing:-0.100px;color:#63738b;font-weight:700;font-size:13.5px;transform:scaleX(1.15);transform-origin:0 0">x</span>
<div style="left:321px;top:270px;width:181px;height:419.7px;background:#fff;border:1px solid #9badc6"></div>
<div style="left:332px;top:280.2px;width:1px;height:269.76px;background-image:repeating-linear-gradient(180deg,#6e727a 0 1px,transparent 1px 2px)"></div>
<div style="left:349px;top:337.78px;width:1px;height:43.58px;background-image:repeating-linear-gradient(180deg,#6e727a 0 1px,transparent 1px 2px)"></div>
<div style="left:333px;top:279.9px;width:7px;height:1px;background-image:repeating-linear-gradient(90deg,#6e727a 0 1px,transparent 1px 2px)"></div>
<span class="t" style="left:342.60px;top:274.23px;letter-spacing:-0.087px;">Preference</span>
<div style="left:333px;top:296.76px;width:7px;height:1px;background-image:repeating-linear-gradient(90deg,#6e727a 0 1px,transparent 1px 2px)"></div>
<span class="t" style="left:342.60px;top:291.09px;letter-spacing:-0.081px;">Activity Refresh Time</span>
<div style="left:333px;top:313.61999999999995px;width:7px;height:1px;background-image:repeating-linear-gradient(90deg,#6e727a 0 1px,transparent 1px 2px)"></div>
<span class="t" style="left:342.60px;top:307.95px;letter-spacing:-0.412px;">Logos</span>
<div style="left:333px;top:330.47999999999996px;width:7px;height:1px;background-image:repeating-linear-gradient(90deg,#6e727a 0 1px,transparent 1px 2px)"></div>
<span class="t" style="left:342.60px;top:324.81px;letter-spacing:-0.550px;">Email</span>
<div style="left:350px;top:347.34px;width:7px;height:1px;background-image:repeating-linear-gradient(90deg,#6e727a 0 1px,transparent 1px 2px)"></div>
<span class="t" style="left:359.50px;top:341.67px;letter-spacing:-0.316px;">Message Header</span>
<div style="left:350px;top:364.2px;width:7px;height:1px;background-image:repeating-linear-gradient(90deg,#6e727a 0 1px,transparent 1px 2px)"></div>
<span class="t" style="left:359.50px;top:358.53px;letter-spacing:-0.464px;">SMTP Server</span>
<div style="left:350px;top:381.06px;width:7px;height:1px;background-image:repeating-linear-gradient(90deg,#6e727a 0 1px,transparent 1px 2px)"></div>
<span class="t" style="left:359.50px;top:375.39px;letter-spacing:-0.516px;">Send Email</span>
<div style="left:333px;top:397.91999999999996px;width:7px;height:1px;background-image:repeating-linear-gradient(90deg,#6e727a 0 1px,transparent 1px 2px)"></div>
<span class="t" style="left:342.60px;top:392.25px;letter-spacing:-0.441px;">Menu</span>
<div style="left:333px;top:414.78px;width:7px;height:1px;background-image:repeating-linear-gradient(90deg,#6e727a 0 1px,transparent 1px 2px)"></div>
<span class="t" style="left:342.60px;top:409.11px;letter-spacing:-0.101px;">Reset</span>
<div style="left:333px;top:431.64px;width:7px;height:1px;background-image:repeating-linear-gradient(90deg,#6e727a 0 1px,transparent 1px 2px)"></div>
<span class="t" style="left:342.60px;top:425.97px;letter-spacing:-0.123px;">Catalog Options</span>
<div style="left:333px;top:448.49999999999994px;width:7px;height:1px;background-image:repeating-linear-gradient(90deg,#6e727a 0 1px,transparent 1px 2px)"></div>
<span class="t" style="left:342.60px;top:442.83px;letter-spacing:-0.216px;">People Options</span>
<div style="left:333px;top:465.35999999999996px;width:7px;height:1px;background-image:repeating-linear-gradient(90deg,#6e727a 0 1px,transparent 1px 2px)"></div>
<div style="left:340.6px;top:457.85999999999996px;width:159px;height:16px;background:#2f69c6;outline:1px dotted #c9d6ee;outline-offset:-1px"></div>
<span class="tw" style="left:342.60px;top:459.69px;letter-spacing:-0.244px;">Schedule Options</span>
<div style="left:333px;top:482.21999999999997px;width:7px;height:1px;background-image:repeating-linear-gradient(90deg,#6e727a 0 1px,transparent 1px 2px)"></div>
<span class="t" style="left:342.60px;top:476.55px;letter-spacing:-0.241px;">Package Options</span>
<div style="left:333px;top:499.08px;width:7px;height:1px;background-image:repeating-linear-gradient(90deg,#6e727a 0 1px,transparent 1px 2px)"></div>
<span class="t" style="left:342.60px;top:493.41px;letter-spacing:-0.231px;">Diagram Options</span>
<div style="left:333px;top:515.94px;width:7px;height:1px;background-image:repeating-linear-gradient(90deg,#6e727a 0 1px,transparent 1px 2px)"></div>
<span class="t" style="left:342.60px;top:510.27px;letter-spacing:-0.221px;">Training Plan Options</span>
<div style="left:333px;top:532.8px;width:7px;height:1px;background-image:repeating-linear-gradient(90deg,#6e727a 0 1px,transparent 1px 2px)"></div>
<span class="t" style="left:342.60px;top:527.13px;letter-spacing:-0.536px;">API</span>
<div style="left:333px;top:549.6600000000001px;width:7px;height:1px;background-image:repeating-linear-gradient(90deg,#6e727a 0 1px,transparent 1px 2px)"></div>
<span class="t" style="left:342.60px;top:543.99px;letter-spacing:-0.402px;">HTML Editor</span>
<div style="left:327.5px;top:326.58px;width:9.4px;height:9.4px;background:linear-gradient(#f4f8fd,#cbdcf3);border:1px solid #8a9fc0;border-radius:2px"></div>
<div style="left:329.9px;top:330.78px;width:4.6px;height:1.1px;background:#30405e"></div>
<div style="left:507.6px;top:270.4px;width:369.4px;height:419.2px;background:#dbe8fb;border:1px solid #7f95b6"></div>
<div style="left:509.40000000000003px;top:272.2px;width:365.79999999999995px;height:415.6px;background:#e3efff;border:1px solid #869cbc"></div>
<div class="hd" style="left:510.40000000000003px;top:273.2px;width:363.79999999999995px;height:17.0px;"></div>
<div style="left:510.40000000000003px;top:290.2px;width:363.79999999999995px;height:1px;background:#97b6e6"></div>
<span class="th" style="left:519.60px;top:275.53px;letter-spacing:-0.219px;">Schedule Options</span>
<svg style="left:862.3px;top:277.0px" width="7" height="9" viewBox="0 0 7 9"><path d="M0.6 3.8 L3.5 1 L6.4 3.8 M0.6 8 L3.5 5.2 L6.4 8" fill="none" stroke="#566a88" stroke-width="1.15"/></svg>
<div class="cb" style="left:522.2px;top:299.2px;width:11.4px;height:11.4px"></div>
<svg style="left:523.8000000000001px;top:301.2px" width="8.4" height="7.6" viewBox="0 0 8.4 7.6"><path d="M.2 1.6 L2.3 1 L3.8 4.8 L6.4 0 L8.3 0 L4.6 7.5 L2.9 7.5Z" fill="#667a98"/></svg>
<span class="t" style="left:537.00px;top:298.53px;letter-spacing:-0.185px;">Send assignment started email</span>
<div class="cb" style="left:522.2px;top:320.86px;width:11.4px;height:11.4px"></div>
<svg style="left:523.8000000000001px;top:322.86px" width="8.4" height="7.6" viewBox="0 0 8.4 7.6"><path d="M.2 1.6 L2.3 1 L3.8 4.8 L6.4 0 L8.3 0 L4.6 7.5 L2.9 7.5Z" fill="#667a98"/></svg>
<span class="t" style="left:537.00px;top:320.19px;letter-spacing:-0.258px;">Send assignment completed email</span>
<div class="cb" style="left:522.2px;top:342.52px;width:11.4px;height:11.4px"></div>
<svg style="left:523.8000000000001px;top:344.52px" width="8.4" height="7.6" viewBox="0 0 8.4 7.6"><path d="M.2 1.6 L2.3 1 L3.8 4.8 L6.4 0 L8.3 0 L4.6 7.5 L2.9 7.5Z" fill="#667a98"/></svg>
<span class="t" style="left:537.00px;top:341.85px;letter-spacing:-0.149px;">Allow user to cancel</span>
<div class="cb" style="left:522.2px;top:364.18px;width:11.4px;height:11.4px"></div>
<svg style="left:523.8000000000001px;top:366.18px" width="8.4" height="7.6" viewBox="0 0 8.4 7.6"><path d="M.2 1.6 L2.3 1 L3.8 4.8 L6.4 0 L8.3 0 L4.6 7.5 L2.9 7.5Z" fill="#667a98"/></svg>
<span class="t" style="left:537.00px;top:363.51px;letter-spacing:-0.110px;">Allow review from assignment list</span>
<div class="cb" style="left:522.2px;top:385.84px;width:11.4px;height:11.4px"></div>
<span class="t" style="left:537.00px;top:385.17px;letter-spacing:-0.115px;">Allow takers to reassign</span>
<div class="cb" style="left:522.2px;top:407.5px;width:11.4px;height:11.4px"></div>
<span class="t" style="left:537.00px;top:406.83px;letter-spacing:-0.048px;">Allow targets to reassign</span>
<div class="cb" style="left:522.2px;top:429.16px;width:11.4px;height:11.4px"></div>
<span class="t" style="left:537.00px;top:428.49px;letter-spacing:-0.383px;">Expires?</span>
<span class="t" style="left:521.60px;top:452.93px;letter-spacing:-0.057px;">Default assignment expiration</span>
<div style="left:676px;top:450px;width:93.6px;height:18.7px;background:#d6e2f4;border:1px solid #b5c6de"></div>
<span class="tg" style="left:744.00px;top:453.13px;letter-spacing:-0.234px;">27</span>
<svg style="left:760.2px;top:454px" width="5.2" height="11.6" viewBox="0 0 5.2 11.6"><path d="M0 3.4 L2.6 .2 L5.2 3.4Z M0 8.2 L2.6 11.4 L5.2 8.2Z" fill="#7c889b"/></svg>
<span class="t" style="left:775.00px;top:453.13px;letter-spacing:-0.367px;">Days</span>
<div style="left:510.40000000000003px;top:480.4px;width:363.79999999999995px;height:1.4px;background:#6b93d6"></div>
<div class="hd" style="left:510.40000000000003px;top:481.79999999999995px;width:363.79999999999995px;height:17.200000000000045px;"></div>
<div style="left:510.40000000000003px;top:499px;width:363.79999999999995px;height:1px;background:#97b6e6"></div>
<span class="th" style="left:519.60px;top:484.93px;letter-spacing:-0.169px;">Default Automatic Reminder Email Options</span>
<svg style="left:862.3px;top:485.8px" width="7" height="9" viewBox="0 0 7 9"><path d="M0.6 3.8 L3.5 1 L6.4 3.8 M0.6 8 L3.5 5.2 L6.4 8" fill="none" stroke="#566a88" stroke-width="1.15"/></svg>
<div class="rbs" style="left:524.3000000000001px;top:507.80000000000007px;width:10.8px;height:10.8px;"></div>
<span class="t" style="left:542.40px;top:506.53px;letter-spacing:-0.406px;">None</span>
<div class="rb" style="left:524.3000000000001px;top:533.0px;width:10.8px;height:10.8px;opacity:.55;"></div>
<div style="left:543px;top:529.1999999999999px;width:37.4px;height:18.4px;background:#d7e3f4;border:1px solid #bccbe0"></div>
<span class="t" style="left:585.70px;top:532.13px;letter-spacing:-0.103px;">days have passed and the assignment is not completed.</span>
<div class="rb" style="left:524.3000000000001px;top:560.5px;width:10.8px;height:10.8px;opacity:.55;"></div>
<div style="left:543px;top:556.6999999999999px;width:37.4px;height:18.4px;background:#d7e3f4;border:1px solid #bccbe0"></div>
<span class="t" style="left:585.70px;top:559.63px;letter-spacing:-0.039px;">days before the due date and the assignment is not completed.</span>
<div class="rb" style="left:524.3000000000001px;top:588.0px;width:10.8px;height:10.8px;opacity:.55;"></div>
<div style="left:543px;top:584.1999999999999px;width:37.4px;height:18.4px;background:#d7e3f4;border:1px solid #bccbe0"></div>
<span class="t" style="left:585.70px;top:587.13px;letter-spacing:-0.046px;">days have passed since the assignment had any activity.</span>
<div style="left:510.40000000000003px;top:613.4px;width:363.79999999999995px;height:1.4px;background:#6b93d6"></div>
<div class="hd" style="left:510.40000000000003px;top:614.8px;width:363.79999999999995px;height:18.200000000000045px;"></div>
<div style="left:510.40000000000003px;top:633px;width:363.79999999999995px;height:1px;background:#97b6e6"></div>
<span class="th" style="left:519.60px;top:618.93px;letter-spacing:-0.088px;">Approval Options</span>
<svg style="left:862.3px;top:619.8px" width="7" height="9" viewBox="0 0 7 9"><path d="M0.6 3.8 L3.5 1 L6.4 3.8 M0.6 8 L3.5 5.2 L6.4 8" fill="none" stroke="#566a88" stroke-width="1.15"/></svg>
<div class="cb" style="left:524px;top:643.6px;width:11.4px;height:11.4px"></div>
<span class="t" style="left:539.30px;top:643.23px;letter-spacing:-0.141px;">Allow approval</span>
<div class="rbs" style="left:547.6px;top:669.6px;width:10.8px;height:10.8px;opacity:.55;"></div>
<span class="tg" style="left:562.30px;top:668.83px;letter-spacing:-0.170px;">Optional</span>
<div class="rb" style="left:623.3000000000001px;top:669.6px;width:10.8px;height:10.8px;opacity:.55;"></div>
<span class="tg" style="left:637.70px;top:668.83px;letter-spacing:-0.040px;">Mandatory</span>
<div class="btnd" style="left:659.3px;top:697.1px;width:69.70000000000005px;height:20.399999999999977px"></div>
<span class="tg" style="left:682.00px;top:701.73px;letter-spacing:-0.321px;">Save</span>
<div class="btnd" style="left:735.3px;top:697.1px;width:69.70000000000005px;height:20.399999999999977px"></div>
<span class="tg" style="left:757.60px;top:701.73px;letter-spacing:-0.256px;">Undo</span>
<div class="btn" style="left:811px;top:697.1px;width:69.70000000000005px;height:20.399999999999977px"></div>
<span class="t" style="left:832.60px;top:701.73px;letter-spacing:-0.306px;">Close</span>
</body></html>
